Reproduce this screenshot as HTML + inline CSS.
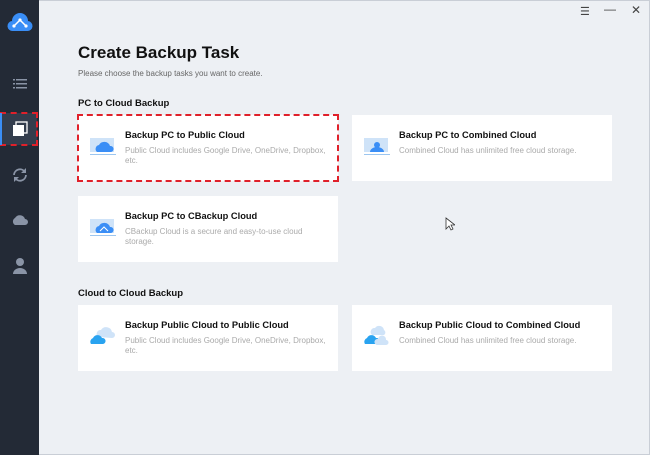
<!DOCTYPE html>
<html><head><style>
*{margin:0;padding:0;box-sizing:border-box}
body{width:650px;height:455px;overflow:hidden;background:#edf0f4;font-family:"Liberation Sans",Arial,sans-serif;position:relative}
.side{position:absolute;left:0;top:0;width:39px;height:455px;background:#232a36}
.ic{position:absolute;left:0;width:39px;display:flex;justify-content:center}
.frame{position:absolute;left:39px;top:0;right:0;bottom:0;border:1px solid #c9ced6;border-left:none}
h1{position:absolute;left:78px;top:43px;font-size:17px;font-weight:bold;color:#111}
.sub{position:absolute;left:78px;top:69px;font-size:8px;color:#666}
.sec{position:absolute;left:78px;font-size:9.5px;font-weight:bold;color:#111}
.card{position:absolute;width:260px;height:66px;background:#fff}
.card .t{position:absolute;left:47px;top:15px;font-size:9.3px;font-weight:bold;color:#111}
.card .d{position:absolute;left:47px;top:31px;width:203px;font-size:8px;line-height:10px;color:#aaa}
.card svg{position:absolute;left:12px;top:22px}
.sel{outline:2px dashed #e0202a;outline-offset:-1px}
</style></head><body>
<div class="side">
 <div class="ic" style="top:12px"><svg width="26" height="20" viewBox="0 0 26 20"><path d="M6 19a5 5 0 0 1-1-10 8 8 0 0 1 16 0 5 5 0 0 1-1 10z" fill="#3a8ef6"/><path d="M7 14l6-6 6 6" stroke="#fff" stroke-width="1.5" fill="none"/><circle cx="7" cy="14" r="1.6" fill="#fff"/><circle cx="13" cy="8" r="1.6" fill="#fff"/><circle cx="19" cy="14" r="1.6" fill="#fff"/></svg></div>
 <div class="ic" style="top:78px"><svg width="14" height="12"><g fill="#8a94a6"><rect x="0" y="1" width="2" height="1.5"/><rect x="3" y="1" width="11" height="1.5"/><rect x="0" y="5" width="2" height="1.5"/><rect x="3" y="5" width="11" height="1.5"/><rect x="0" y="9" width="2" height="1.5"/><rect x="3" y="9" width="11" height="1.5"/></g></svg></div>
 <div style="position:absolute;left:1px;top:113px;width:36px;height:32px;background:#333d4d;outline:2px dashed #e0202a;outline-offset:-1px"></div>
 <div style="position:absolute;left:0;top:113px;width:2px;height:32px;background:#3a8ef6"></div>
 <div class="ic" style="top:121px"><svg width="16" height="16"><rect x="4" y="1" width="11" height="11" fill="none" stroke="#fff" stroke-width="1.3"/><rect x="1" y="4" width="11" height="11" fill="#fff"/></svg></div>
 <div class="ic" style="top:167px"><svg width="18" height="16" viewBox="0 0 18 16"><path d="M3 8a6 6 0 0 1 11-3M15 8a6 6 0 0 1-11 3" stroke="#8a94a6" stroke-width="1.8" fill="none"/><path d="M15 1v5h-5zM3 15v-5h5z" fill="#8a94a6"/></svg></div>
 <div class="ic" style="top:213px"><svg width="18" height="12"><path d="M4 12a4 4 0 0 1 0-7 5.5 5.5 0 0 1 10 1 3 3 0 0 1 0 6z" fill="#8a94a6"/></svg></div>
 <div class="ic" style="top:257px"><svg width="16" height="17"><circle cx="8" cy="5" r="4" fill="#8a94a6"/><path d="M1 17a7 6 0 0 1 14 0z" fill="#8a94a6"/></svg></div>
</div>
<div class="frame"></div>
<div style="position:absolute;left:580px;top:5px;font-size:11px;color:#444">☰</div>
<div style="position:absolute;left:604px;top:2px;font-size:12px;color:#444">—</div>
<div style="position:absolute;left:631px;top:3px;font-size:12px;color:#444">✕</div>
<h1>Create Backup Task</h1>
<div class="sub">Please choose the backup tasks you want to create.</div>
<div class="sec" style="top:98px">PC to Cloud Backup</div>
<div class="sec" style="top:288px">Cloud to Cloud Backup</div>

<div class="card sel" style="left:78px;top:115px"><svg width="26" height="18"><rect x="0" y="1" width="24" height="14" fill="#cfe3f8"/><path d="M7 15a4 4 0 0 1 2-7 6 6 0 0 1 11 1 3 3 0 0 1 1 6z" fill="#3a8ef6"/><rect x="0" y="17" width="26" height="1" fill="#9cc6f0"/></svg><div class="t">Backup PC to Public Cloud</div><div class="d">Public Cloud includes Google Drive, OneDrive, Dropbox, etc.</div></div>
<div class="card" style="left:352px;top:115px"><svg width="26" height="18"><rect x="0" y="1" width="24" height="14" fill="#cfe3f8"/><circle cx="13" cy="8" r="3" fill="#3a8ef6"/><path d="M6 15a7 5 0 0 1 14 0z" fill="#3a8ef6"/><rect x="0" y="17" width="26" height="1" fill="#9cc6f0"/></svg><div class="t">Backup PC to Combined Cloud</div><div class="d">Combined Cloud has unlimited free cloud storage.</div></div>
<div class="card" style="left:78px;top:196px"><svg width="26" height="18"><rect x="0" y="1" width="24" height="14" fill="#cfe3f8"/><path d="M7 15a4 4 0 0 1 2-7 6 6 0 0 1 11 1 3 3 0 0 1 1 6z" fill="#3a8ef6"/><path d="M10 13l4-4 4 4" stroke="#fff" fill="none"/><rect x="0" y="17" width="26" height="1" fill="#9cc6f0"/></svg><div class="t">Backup PC to CBackup Cloud</div><div class="d">CBackup Cloud is a secure and easy-to-use cloud storage.</div></div>
<div class="card" style="left:78px;top:305px"><svg width="26" height="20" style="top:20px"><path d="M8 12a4 4 0 0 1 3-7 6 6 0 0 1 11 2 3 3 0 0 1 0 6z" fill="#cfe3f8"/><path d="M1 19a4 4 0 0 1 2-6 5 5 0 0 1 9 0 3 3 0 0 1 1 6z" fill="#29a3f0"/></svg><div class="t">Backup Public Cloud to Public Cloud</div><div class="d">Public Cloud includes Google Drive, OneDrive, Dropbox, etc.</div></div>
<div class="card" style="left:352px;top:305px"><svg width="26" height="22" style="top:20px"><path d="M8 10a4 4 0 0 1 3-7 5 5 0 0 1 9 2 3 3 0 0 1 0 5z" fill="#cfe3f8"/><path d="M1 19a4 4 0 0 1 2-6 5 5 0 0 1 9 0 3 3 0 0 1 1 6z" fill="#29a3f0"/><path d="M13 20a3 3 0 0 1 1-6 4 4 0 0 1 8 1 2.5 2.5 0 0 1 0 5z" fill="#cfe3f8"/></svg><div class="t">Backup Public Cloud to Combined Cloud</div><div class="d">Combined Cloud has unlimited free cloud storage.</div></div>
<svg style="position:absolute;left:445px;top:217px" width="10" height="14"><path d="M1 1v11l3-3 2 4 2-1-2-4h4z" fill="#fff" stroke="#333" stroke-width="0.8"/></svg>
</body></html>
